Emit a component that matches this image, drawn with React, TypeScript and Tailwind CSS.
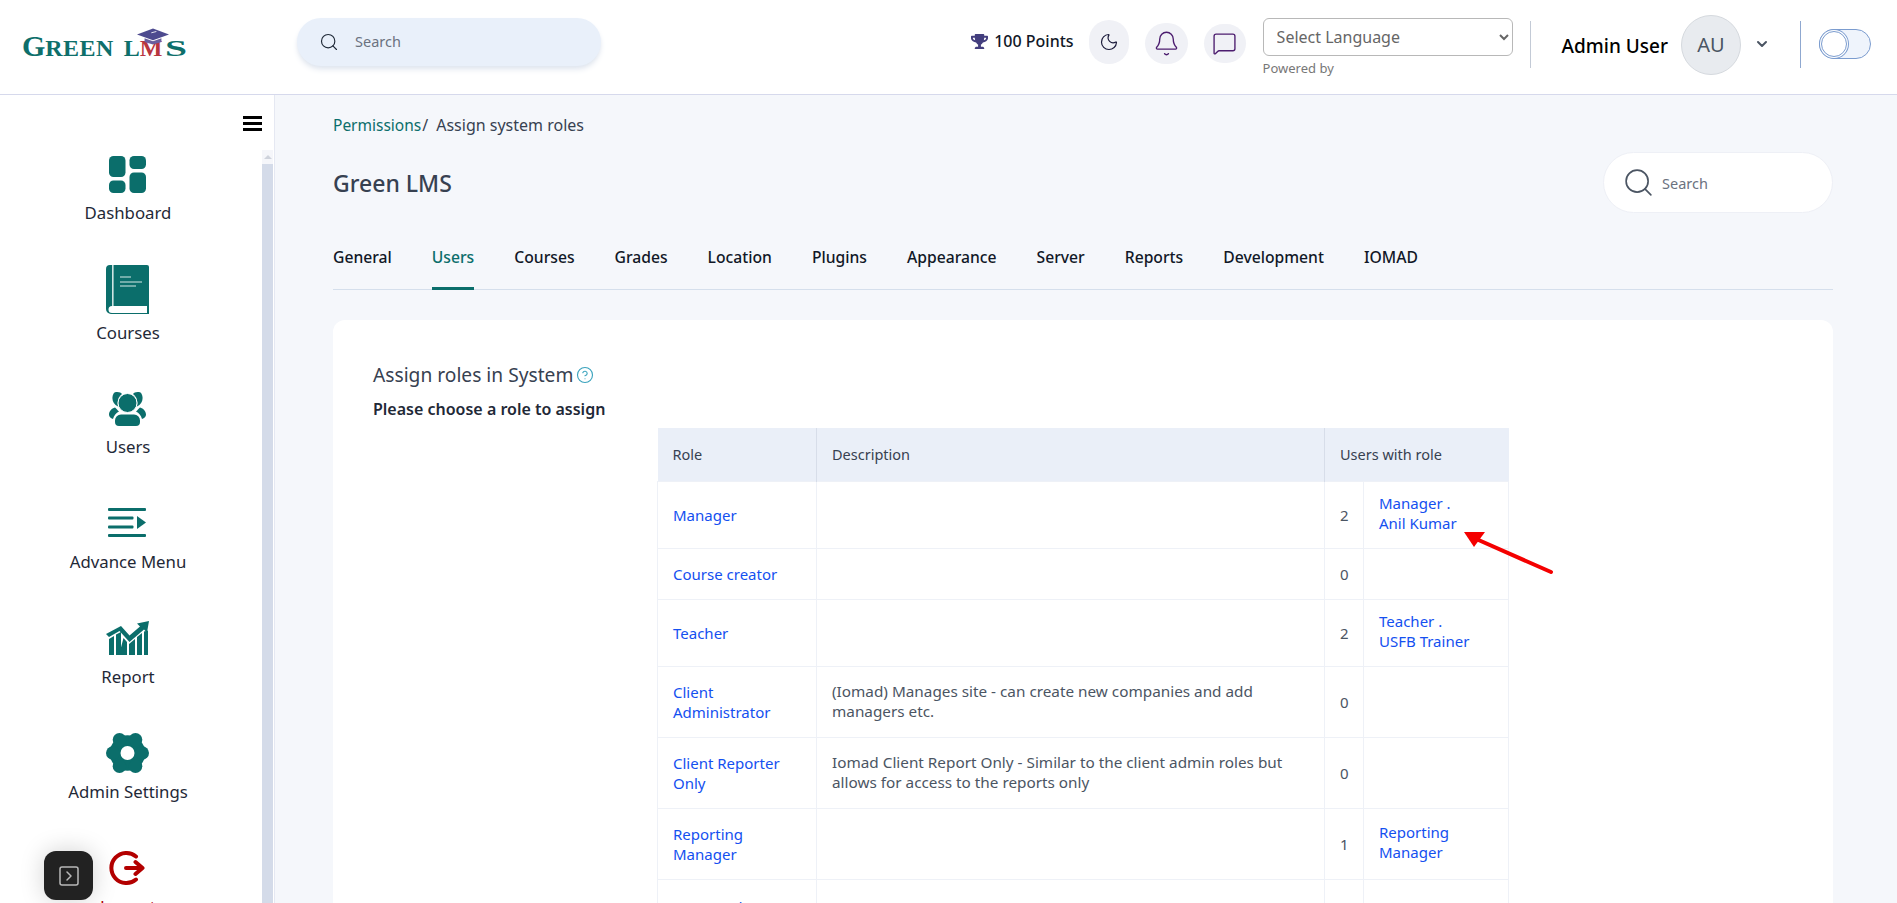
import { Moon, Bell, MessageSquare, Search, ChevronDown, CircleHelp, SquareChevronRight } from 'lucide-react';
import { FaTrophy } from 'react-icons/fa';

const font = "font-['Noto_Sans','Open_Sans',sans-serif]";

function DashboardIcon() {
  return (
    <svg width="37" height="37" viewBox="0 0 37 37" fill="#0b6e6b">
      <rect x="0" y="0" width="16.5" height="21" rx="4.5" />
      <rect x="0" y="24.5" width="16.5" height="12.5" rx="4.5" />
      <rect x="20.5" y="0" width="16.5" height="13" rx="4.5" />
      <rect x="20.5" y="16.5" width="16.5" height="20.5" rx="4.5" />
    </svg>
  );
}

function BookIcon() {
  return (
    <svg width="43" height="49" viewBox="0 0 43 49">
      <path d="M4 0H41a2 2 0 0 1 2 2V41H6a3.5 3.5 0 0 0 0 7H43v1H5a5 5 0 0 1-5-5V4a4 4 0 0 1 4-4z" fill="#0b6e6b" />
      <rect x="6" y="0" width="1.6" height="41" fill="#cfe3e2" />
      <path d="M14 12H25M14 17H36M14 21H30" stroke="#d7e9e8" strokeWidth="1.2" />
      <rect x="41" y="41" width="2" height="7" fill="#0b6e6b" />
    </svg>
  );
}

function UsersIcon() {
  return (
    <svg width="37" height="34" viewBox="0 0 37 34" fill="#0b6e6b">
      <path d="M5.500 0.500C9 -0.500 12 0.500 13 2 9.500 4.500 8 9 9 14.500 5 12.500 3 9 3.500 5 3.700 3 4.400 1.500 5.500 0.500z" />
      <path d="M31.500 0.500C28 -0.500 25 0.500 24 2 27.500 4.500 29 9 28 14.500 32 12.500 34 9 33.500 5 33.300 3 32.600 1.500 31.500 0.500z" />
      <path d="M6 15.500C2.500 16.500 0 19.500 0 22.500c0 2 1.500 4 4 4.500 1-3.500 3-6 6-7.500C8.500 18 7 16.500 6 15.500z" />
      <path d="M31 15.500c3.500 1 6 4 6 7 0 2-1.500 4-4 4.500-1-3.500-3-6-6-7.500 1.500-1.500 3-3 4-4z" />
      <circle cx="18.500" cy="11" r="9.500" stroke="#fff" strokeWidth="1" />
      <path d="M12 22.500h13a6 6 0 0 1 6 6V30a4 4 0 0 1-4 4H10a4 4 0 0 1-4-4v-1.500a6 6 0 0 1 6-6z" />
    </svg>
  );
}

function AdvanceIcon() {
  return (
    <svg width="38" height="29" viewBox="0 0 38 29" fill="#0b6e6b">
      <rect x="0" y="0" width="38" height="3" rx="1" />
      <rect x="0" y="8.500" width="25.500" height="3" rx="1" />
      <rect x="0" y="17.500" width="25.500" height="3" rx="1" />
      <rect x="0" y="26" width="38" height="3" rx="1" />
      <path d="M29 8l9 6.500-9 6.500z" />
    </svg>
  );
}

function ReportIcon() {
  return (
    <svg width="43" height="34" viewBox="0 0 43 34" fill="#0b6e6b">
      <path d="M0 13L15 5l8.500 9.500L34 5.500 31 2.500 43 0l-2 11.500-3-3L23.500 21 13.500 10 3 16z" />
      <path d="M3 18l5-3v19H3zM10 13.500l5-2.500v23h-5zM17.500 17l3.500 4v13h-8zM23 23l6-5v16h-6zM31 16l5-4v22h-5zM38 10.500l4 -1V34h-4z" />
    </svg>
  );
}

function GearIcon() {
  return (
    <svg width="43" height="40" viewBox="0 0 43 40">
      <g fill="#0b6e6b">
        <circle cx="21.500" cy="20" r="17.800" />
        <circle cx="36.200" cy="20" r="6.800" />
        <circle cx="6.800" cy="20" r="6.800" />
        <circle cx="29.500" cy="6.800" r="6.800" />
        <circle cx="13.500" cy="6.800" r="6.800" />
        <circle cx="29.500" cy="33.200" r="6.800" />
        <circle cx="13.500" cy="33.200" r="6.800" />
      </g>
      <circle cx="21.500" cy="20" r="7" fill="#fff" />
    </svg>
  );
}

function LogoutIcon() {
  return (
    <svg width="36" height="34" viewBox="0 0 36 34" fill="none" stroke="#b30000" strokeWidth="4" strokeLinecap="round" strokeLinejoin="round">
      <path d="M27 5.500A15 15 0 1 0 27 28.500" />
      <path d="M17 17H33M26.500 11l7 6-7 6" />
    </svg>
  );
}

const navItems = [
  { label: 'Dashboard', icon: <DashboardIcon />, item: 'h-[94px]', gap: 'mb-[8px]', tone: 'text-[#1f2937]' },
  { label: 'Courses', icon: <BookIcon />, item: 'h-[120px]', gap: 'mb-[7px]', tone: 'text-[#1f2937]' },
  { label: 'Users', icon: <UsersIcon />, item: 'h-[114px]', gap: 'mb-[9px]', tone: 'text-[#1f2937]' },
  { label: 'Advance Menu', icon: <AdvanceIcon />, item: 'h-[115px]', gap: 'mb-[13px]', tone: 'text-[#1f2937]' },
  { label: 'Report', icon: <ReportIcon />, item: 'h-[115px]', gap: 'mb-[10px]', tone: 'text-[#1f2937]' },
  { label: 'Admin Settings', icon: <GearIcon />, item: 'h-[115px]', gap: 'mb-[7px]', tone: 'text-[#1f2937]' },
  { label: 'Logout', icon: <LogoutIcon />, item: 'h-[115px]', gap: 'mb-[10px]', tone: 'text-[#b30000]' },
];

const tabs = ['General', 'Users', 'Courses', 'Grades', 'Location', 'Plugins', 'Appearance', 'Server', 'Reports', 'Development', 'IOMAD'];

const rows = [
  { h: 'h-[67px]', role: ['Manager'], desc: [], count: '2', users: ['Manager .', 'Anil Kumar'] },
  { h: 'h-[51px]', role: ['Course creator'], desc: [], count: '0', users: [] },
  { h: 'h-[67px]', role: ['Teacher'], desc: [], count: '2', users: ['Teacher .', 'USFB Trainer'] },
  { h: 'h-[71px]', role: ['Client', 'Administrator'], desc: ['(Iomad) Manages site - can create new companies and add', 'managers etc.'], count: '0', users: [] },
  { h: 'h-[71px]', role: ['Client Reporter', 'Only'], desc: ['Iomad Client Report Only - Similar to the client admin roles but', 'allows for access to the reports only'], count: '0', users: [] },
  { h: 'h-[71px]', role: ['Reporting', 'Manager'], desc: [], count: '1', users: ['Reporting', 'Manager'] },
];

function Logo() {
  return (
    <div className="relative w-[165px] h-[30px] flex items-baseline text-[#0e6f6b] font-['Liberation_Serif',serif] font-bold leading-none">
      <span className="text-[30px]">G</span>
      <span className="text-[24px] tracking-[0.4px]">REEN</span>
      <span className="text-[24px] ml-[10px]">L</span>
      <span className="text-[24px] text-[#b8353e]">M</span>
      <span className="inline-block text-[24px] ml-[3px] origin-left scale-x-[1.65]">S</span>
      <svg className="absolute left-[115px] -top-[3px]" width="32" height="18" viewBox="0 0 38 20">
        <path d="M19 0l19 7-19 7L0 7z" fill="#4d4a8f" />
        <path d="M9 11.500l10 3.500 10-3.500V16l-10 3-10-3z" fill="#6a5f9e" />
        <path d="M17 5l6-1.500" stroke="#fff" strokeWidth="1" />
      </svg>
    </div>
  );
}

function Header() {
  return (
    <header className="flex items-start h-[95px] shrink-0 pl-[22px] bg-white border-b border-[#d6d9ec]">
      <div className="mt-[31px]">
        <Logo />
      </div>
      <div className="ml-[110px] mt-[18px] flex items-center w-[304px] h-[48px] rounded-full bg-[#e9f0fa] shadow-md shadow-[#dfe5ee] pl-[22px] gap-[16px]">
        <Search size={20} strokeWidth={1.4} className="text-[#1f2937]" />
        <span className="text-[14.5px] text-[#6b7280]">Search</span>
      </div>
      <div className="ml-auto flex items-start pr-[26px]">
        <div className="flex items-center gap-[6px] mt-[29px] h-[24px] text-[16px] font-medium text-[#111827]">
          <FaTrophy size={17} className="text-[#433e7e]" />
          <span>100 Points</span>
        </div>
        <div className="ml-[15px] mt-[20px] w-[40px] h-[44px] rounded-full bg-[#f0f1f6] flex items-center justify-center">
          <Moon size={20} strokeWidth={1.4} className="text-[#1a1a3a]" />
        </div>
        <div className="ml-[16px] mt-[23px] w-[43px] h-[41px] rounded-full bg-[#f0f1f6] flex items-center justify-center">
          <Bell size={27} strokeWidth={1.2} className="text-[#4c1d6f]" />
        </div>
        <div className="ml-[16px] mt-[24px] w-[42px] h-[39px] rounded-full bg-[#f0f1f6] flex items-center justify-center">
          <MessageSquare size={25} strokeWidth={1.3} className="text-[#4c1d6f]" />
        </div>
        <div className="ml-[17px] mt-[18px] w-[250px]">
          <select className="w-full h-[38px] border border-[#b8b8b8] rounded-md pl-[9px] text-[16px] text-[#666] bg-white">
            <option>Select Language</option>
          </select>
          <div className="mt-[3px] text-[13px] text-[#777]">Powered by</div>
        </div>
        <div className="ml-[17px] mt-[21px] w-px h-[47px] bg-[#c3cad6]" />
        <div className="ml-[31px] mt-[33px] text-[19px] font-medium text-black leading-[26px]">Admin User</div>
        <div className="ml-[13px] mt-[15px] w-[60px] h-[60px] rounded-full bg-[#e8ebef] border border-[#d5d9de] flex items-center justify-center text-[20px] text-[#4b5563]">
          AU
        </div>
        <ChevronDown size={16} strokeWidth={3} className="ml-[13px] mt-[36px] text-[#4b5563]" />
        <div className="ml-[30px] mt-[21px] w-px h-[47px] bg-[#8fa8d0]" />
        <div className="ml-[18px] mt-[29px] w-[52px] h-[30px] rounded-full border border-[#7b9ccf] bg-[#eff4fc] flex items-center pl-px">
          <div className="w-[26px] h-[26px] rounded-full bg-white border border-[#7b9ccf] ring-1 ring-[#7b9ccf] ring-offset-1" />
        </div>
      </div>
    </header>
  );
}

function Sidebar() {
  return (
    <aside className="w-[275px] shrink-0 bg-white border-r border-[#e5e8f2] flex flex-col overflow-hidden">
      <div className="flex justify-end pt-[21px] pr-[12px]">
        <div className="w-[19px] h-[15px] flex flex-col justify-between">
          <div className="h-[3px] bg-black" />
          <div className="h-[3px] bg-black" />
          <div className="h-[3px] bg-black" />
        </div>
      </div>
      <div className="flex flex-1 min-h-0">
        <nav className="w-[256px] shrink-0">
          {navItems.map((n) => (
            <div key={n.label} className={`${n.item} flex flex-col items-center justify-end`}>
              <div className={`${n.gap} mr-[2px]`}>{n.icon}</div>
              <div className={`h-[24px] leading-[24px] text-[16.8px] ${n.tone}`}>{n.label}</div>
            </div>
          ))}
        </nav>
        <div className="ml-[6px] mt-[19px] w-[11px] flex flex-col">
          <div className="h-[14px] bg-[#f5f6fa] flex items-center justify-center">
            <div className="w-0 h-0 border-x-[4px] border-x-transparent border-b-[4px] border-b-[#cfd3dc]" />
          </div>
          <div className="flex-1 bg-[#d4dbe9]" />
        </div>
      </div>
    </aside>
  );
}

function Lines({ lines, className }: { lines: string[]; className?: string }) {
  return (
    <div className={className}>
      {lines.map((l) => (
        <div key={l}>{l}</div>
      ))}
    </div>
  );
}

function RolesTable() {
  const cell = 'border border-[#eef1f7] align-middle pl-[15px]';
  const head = 'border-r border-[#d7dde9] last:border-r-0 text-left font-normal align-middle pl-[15px] text-[14.5px] text-[#374151]';
  const link = 'text-[#1450f0]';
  return (
    <table className="ml-[284px] mt-[7px] w-[851px] table-fixed border-collapse text-[15px] leading-[20px] text-[#4b5563]">
      <colgroup>
        <col className="w-[159px]" />
        <col className="w-[508px]" />
        <col className="w-[39px]" />
        <col className="w-[145px]" />
      </colgroup>
      <thead>
        <tr className="h-[53px] bg-[#eaeff8]">
          <th className={head}>Role</th>
          <th className={head}>Description</th>
          <th colSpan={2} className={head}>Users with role</th>
        </tr>
      </thead>
      <tbody>
        {rows.map((r) => (
          <tr key={r.role.join(' ')} className={r.h}>
            <td className={cell}>
              <Lines lines={r.role} className={link} />
            </td>
            <td className={`${cell} pb-[2px] text-[15.3px]`}>
              <Lines lines={r.desc} />
            </td>
            <td className={cell}>{r.count}</td>
            <td className={`${cell} pb-[3px]`}>
              <Lines lines={r.users} className={link} />
            </td>
          </tr>
        ))}
        <tr className="h-[71px]">
          <td className={`${cell} !align-top pt-[17px]`}>
            <span className={link}>SPU Head</span>
          </td>
          <td className={cell} />
          <td className={`${cell} !align-top pt-[19px]`}>0</td>
          <td className={cell} />
        </tr>
      </tbody>
    </table>
  );
}

function Main() {
  return (
    <main className="flex-1 min-w-0 bg-[#f5f7fb] pl-[58px] pr-[64px] pt-[19px] flex flex-col overflow-hidden">
      <div className="h-[22px] leading-[22px] flex items-baseline">
        <span className="text-[15.5px] text-[#0b6e6b]">Permissions</span>
        <span className="text-[16px] text-[#374151] ml-[1px]">/</span>
        <span className="text-[16px] text-[#374151] ml-[8px]">Assign system roles</span>
      </div>
      <div className="mt-[16px] flex items-center justify-between">
        <div className="pt-[1px] text-[23px] font-medium text-[#374151]">Green LMS</div>
        <div className="w-[230px] h-[61px] rounded-full bg-white border border-[#eef0f6] flex items-center pl-[18px] gap-[7px]">
          <Search size={33} strokeWidth={1.2} className="text-[#4b5563]" />
          <span className="pt-[2px] text-[14.5px] text-[#6b7280]">Search</span>
        </div>
      </div>
      <div className="mt-[32px] flex gap-[40px] border-b border-[#d5dfec]">
        {tabs.map((t) => (
          <div
            key={t}
            className={
              t === 'Users'
                ? 'h-[45px] -mb-px leading-[24px] text-[15.7px] font-medium text-[#0b6e6b] border-b-[3px] border-[#0b6e6b]'
                : 'h-[45px] -mb-px leading-[24px] text-[15.7px] font-medium text-[#111827]'
            }
          >
            {t}
          </div>
        ))}
      </div>
      <section className="mt-[30px] flex-1 rounded-t-xl bg-white pl-[40px] pt-[41px]">
        <div className="flex items-center h-[28px] text-[19.2px] text-[#374151]">
          Assign roles in System
          <CircleHelp size={18} strokeWidth={1.5} className="ml-[3px] text-[#3aa3bd]" />
        </div>
        <div className="mt-[8px] h-[24px] leading-[24px] text-[16px] font-semibold text-[#1f2937]">Please choose a role to assign</div>
        <RolesTable />
      </section>
    </main>
  );
}

export default function App() {
  return (
    <div className={`relative h-[903px] w-full flex flex-col overflow-hidden bg-white ${font}`}>
      <Header />
      <div className="flex flex-1 min-h-0">
        <Sidebar />
        <Main />
      </div>
      <svg className="absolute left-[1460px] top-[526px]" width="96" height="50" viewBox="0 0 96 50">
        <path d="M91 46L14 12" stroke="#f40000" strokeWidth="4" strokeLinecap="round" />
        <path d="M4 6L25 6 14 21z" fill="#f40000" />
      </svg>
      <div className="absolute left-[44px] top-[851px] w-[49px] h-[49px] rounded-xl bg-[#222] shadow-[0_0_24px_rgba(0,0,0,0.18)] flex items-center justify-center">
        <SquareChevronRight size={24} strokeWidth={1.5} className="text-[#b8b8b8]" />
      </div>
    </div>
  );
}
